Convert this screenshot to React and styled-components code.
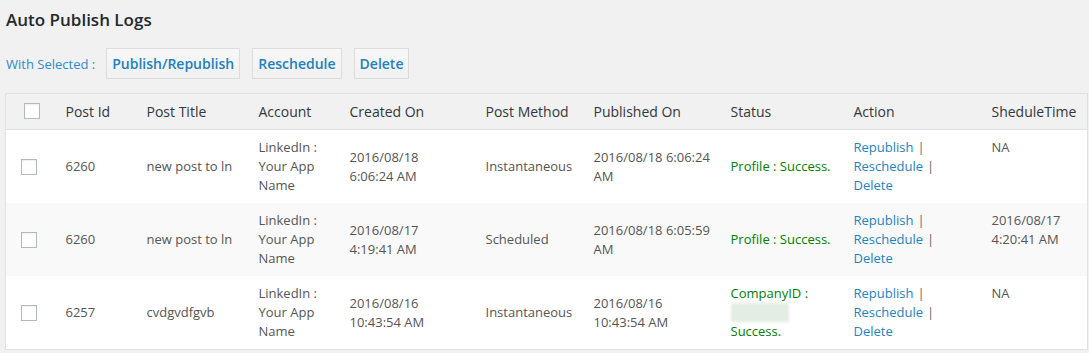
import React from "react";
import styled, { createGlobalStyle } from "styled-components";

const Global = createGlobalStyle`
  html, body { margin: 0; padding: 0; background: #f1f1f1; }
  body { font-family: "Open Sans", "Noto Sans", sans-serif; color: #444; }
`;

const Page = styled.div`
  padding: 10px 2px 0 5px;
`;

const Title = styled.h2`
  margin: 0 0 0 1px;
  font-size: 17px;
  line-height: 20px;
  font-weight: 600;
  color: #23282d;
`;

const Toolbar = styled.div`
  display: flex;
  align-items: center;
  gap: 12px;
  margin-top: 18px;
  height: 31px;
`;

const Label = styled.span`
  font-size: 13px;
  color: #2b8ccd;
  margin-left: 1px;
  margin-right: -1px;
`;

const Button = styled.button`
  font-family: inherit;
  font-size: 14px;
  font-weight: 600;
  color: #2380be;
  height: 31px;
  padding: 0 5px;
  border: 1px solid #dcdcdc;
  background: linear-gradient(#f8f8f8, #f1f1f1);
  border-radius: 0;
  cursor: pointer;
`;

const Table = styled.table`
  margin-top: 14px;
  width: 1082px;
  border-collapse: collapse;
  table-layout: fixed;
  background: #fff;
  border: 1px solid #e1e1e1;
`;

const HeadRow = styled.tr`
  background: #f1f1f1;
  border-bottom: 1px solid #e1e1e1;
`;

const Th = styled.th`
  text-align: left;
  font-weight: 400;
  font-size: 14px;
  color: #32373c;
  padding: 8px 10px 7px;
  line-height: 20px;
  height: 20px;
`;

const CheckTh = styled(Th)`
  padding: 7px 0 8px 18px;
`;

const Row = styled.tr`
  background: ${(p) => (p.$alt ? "#f9f9f9" : "#fff")};
`;

const Td = styled.td`
  font-size: 13px;
  line-height: 19px;
  color: #555;
  padding: 8px ${(p) => p.$pr ?? 10}px 8px 10px;
  vertical-align: ${(p) => (p.$top ? "top" : "middle")};
  height: 57px;
`;

const CheckTd = styled(Td)`
  padding: 8px 0 8px 15px;
`;

const Check = styled.span`
  display: block;
  width: 14px;
  height: 14px;
  border: 1px solid #b4b9be;
  background: #fff;
  box-shadow: inset 0 1px 2px rgba(0, 0, 0, 0.07);
`;

const Status = styled.span`
  color: #008000;
`;

const Blur = styled.span`
  display: block;
  width: 58px;
  height: 19px;
  background: #e3ede3;
  filter: blur(1.5px);
`;

const Actions = styled.div`
  display: flex;
  flex-direction: column;
  align-items: flex-start;
`;

const Link = styled.a`
  color: #1e83c2;
  text-decoration: none;
`;

const Sep = styled.span`
  color: #666;
  margin-left: 4px;
`;

const rows = [
  {
    id: "6260",
    title: "new post to ln",
    created: "2016/08/18 6:06:24 AM",
    method: "Instantaneous",
    published: "2016/08/18 6:06:24 AM",
    status: <Status>Profile : Success.</Status>,
    sched: "NA",
  },
  {
    id: "6260",
    title: "new post to ln",
    created: "2016/08/17 4:19:41 AM",
    method: "Scheduled",
    published: "2016/08/18 6:05:59 AM",
    status: <Status>Profile : Success.</Status>,
    sched: "2016/08/17 4:20:41 AM",
  },
  {
    id: "6257",
    title: "cvdgvdfgvb",
    created: "2016/08/16 10:43:54 AM",
    method: "Instantaneous",
    published: "2016/08/16 10:43:54 AM",
    status: (
      <Status>
        CompanyID :<Blur />
        Success.
      </Status>
    ),
    sched: "NA",
  },
];

const widths = [50, 81, 112, 91, 136, 108, 137, 123, 138, 106];

export default function App() {
  return (
    <Page>
      <Global />
      <Title>Auto Publish Logs</Title>
      <Toolbar>
        <Label>With Selected :</Label>
        <Button>Publish/Republish</Button>
        <Button>Reschedule</Button>
        <Button>Delete</Button>
      </Toolbar>
      <Table>
        <colgroup>
          {widths.map((w, i) => (
            <col key={i} style={{ width: w }} />
          ))}
        </colgroup>
        <thead>
          <HeadRow>
            <CheckTh>
              <Check />
            </CheckTh>
            <Th>Post Id</Th>
            <Th>Post Title</Th>
            <Th>Account</Th>
            <Th>Created On</Th>
            <Th>Post Method</Th>
            <Th>Published On</Th>
            <Th>Status</Th>
            <Th>Action</Th>
            <Th>SheduleTime</Th>
          </HeadRow>
        </thead>
        <tbody>
          {rows.map((r, i) => (
            <Row key={i} $alt={i % 2 === 1}>
              <CheckTd>
                <Check />
              </CheckTd>
              <Td>{r.id}</Td>
              <Td>{r.title}</Td>
              <Td>LinkedIn : Your App Name</Td>
              <Td $pr={24}>{r.created}</Td>
              <Td>{r.method}</Td>
              <Td $pr={8}>{r.published}</Td>
              <Td $pr={6}>{r.status}</Td>
              <Td>
                <Actions>
                  <span>
                    <Link href="#">Republish</Link>
                    <Sep>|</Sep>
                  </span>
                  <span>
                    <Link href="#">Reschedule</Link>
                    <Sep>|</Sep>
                  </span>
                  <Link href="#">Delete</Link>
                </Actions>
              </Td>
              <Td $top>{r.sched}</Td>
            </Row>
          ))}
        </tbody>
      </Table>
    </Page>
  );
}
